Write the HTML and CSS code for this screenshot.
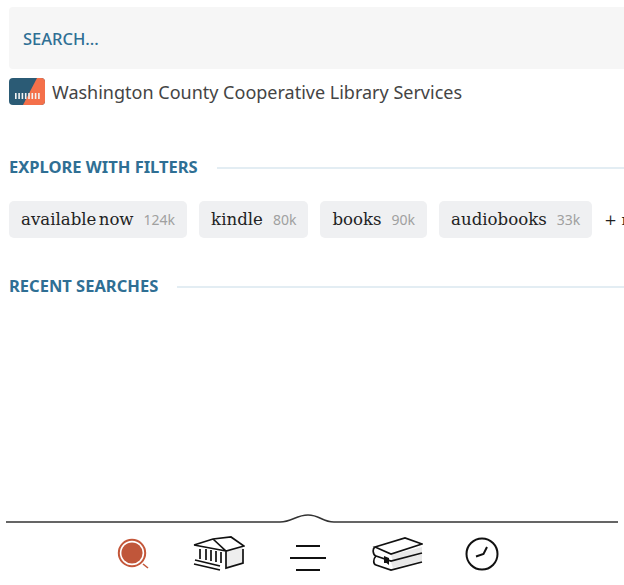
FILE: index.html
```html
<!DOCTYPE html>
<html>

<head>
  <title>Library Search</title>
  <link rel="stylesheet" href="styles.css">
</head>

<body>
  <div class="page">
    <div class="search-box">SEARCH...</div>

    <div class="library">
      <svg class="library-logo" viewBox="0 0 36 27" width="36" height="27">
        <rect width="36" height="27" rx="4" fill="#2b5b75"/>
        <path d="M28 0h4a4 4 0 0 1 4 4v19a4 4 0 0 1-4 4H14z" fill="#f4704a"/>
        <g fill="#f3f3f3">
          <rect x="6" y="15" width="1.6" height="6"/>
          <rect x="9.3" y="15" width="1.6" height="6"/>
          <rect x="12.6" y="15" width="1.6" height="6"/>
          <rect x="15.9" y="15" width="1.6" height="6"/>
          <rect x="19.2" y="15" width="1.6" height="6"/>
          <rect x="22.5" y="15" width="1.6" height="6"/>
          <rect x="25.8" y="15" width="1.6" height="6"/>
          <rect x="29.1" y="15" width="1.6" height="6"/>
        </g>
      </svg>
      <span>Washington County Cooperative Library Services</span>
    </div>

    <div class="section-title explore">
      <h2>EXPLORE WITH FILTERS</h2>
      <div class="rule"></div>
    </div>

    <div class="filters">
      <div class="chip"><span class="chip-name">available now</span><span class="chip-count">124k</span></div>
      <div class="chip"><span class="chip-name">kindle</span><span class="chip-count">80k</span></div>
      <div class="chip"><span class="chip-name">books</span><span class="chip-count">90k</span></div>
      <div class="chip"><span class="chip-name">audiobooks</span><span class="chip-count">33k</span></div>
      <div class="more">+ more</div>
    </div>

    <div class="section-title recent">
      <h2>RECENT SEARCHES</h2>
      <div class="rule"></div>
    </div>
  </div>

  <nav class="nav">
    <svg class="nav-line" viewBox="0 0 612 12" width="612" height="12">
      <path d="M0 11H274C286 11 290 4 302 4S316 11 328 11H612" fill="none" stroke="#333" stroke-width="1.5"/>
    </svg>
    <div class="nav-icons">
      <!-- search -->
      <svg viewBox="0 0 34 34" width="34" height="34">
        <circle cx="16" cy="16" r="13.2" fill="none" stroke="#c4573a" stroke-width="2"/>
        <circle cx="16" cy="16" r="10.6" fill="#c0563a"/>
        <path d="M27 27l5 4" stroke="#c4573a" stroke-width="1.6" fill="none"/>
      </svg>
      <!-- library -->
      <svg class="nav-bank" viewBox="0 0 52 36" width="52" height="36">
        <path d="M33 15L50 10V27L33 33z" fill="#eee"/>
        <path d="M1 9L20 3L38 1L51 10L33 15L20 3M1 9L33 15M33 15V32L50 27V13" fill="none" stroke="#111" stroke-width="1.7"/>
        <path d="M7 13V23M13 13V24M18 14V25M23 15V26M28 16V27" fill="none" stroke="#111" stroke-width="1.7"/>
        <path d="M2 24L27 30M1 28L27 34" fill="none" stroke="#111" stroke-width="1.7"/>
      </svg>
      <!-- menu -->
      <svg class="nav-menu" viewBox="0 0 36 28" width="36" height="28">
        <path d="M6 2H30M0 14H36M6 26H30" stroke="#111" stroke-width="2" fill="none"/>
      </svg>
      <!-- books -->
      <svg class="nav-books" viewBox="0 0 52 34" width="52" height="34">
        <path d="M20 18L51 10V15L22 24zM20 25L51 17V24L22 31z" fill="#e8e8e8"/>
        <path d="M4 10L34 1L51 7L20 17zM4 10C1 12 2 18 5 19L20 24L51 16M5 19C2 22 2 27 5 28L20 33L51 25" fill="none" stroke="#111" stroke-width="1.7"/>
        <path d="M13 19L18 21V28L15.5 26L13 26z" fill="#111"/>
      </svg>
      <!-- recent -->
      <svg class="nav-clock" viewBox="0 0 34 34" width="34" height="34">
        <circle cx="17" cy="17" r="15.5" fill="none" stroke="#111" stroke-width="2"/>
        <path d="M22 10L18.5 17L11 19.5" fill="none" stroke="#111" stroke-width="2"/>
      </svg>
    </div>
  </nav>
</body>

</html>
```

FILE: styles.css
```css
/* Global styles */
body {
  font-family: 'Noto Sans', sans-serif;
  margin: 0;
  width: 624px;
  height: 585px;
  overflow: hidden;
  display: flex;
  flex-direction: column;
  background-color: #ffffff;
}

.page {
  flex-grow: 1;
  padding: 7px 0 0 9px;
  min-height: 0;
}

/* Search box */
.search-box {
  height: 62px;
  margin-right: -20px;
  padding-left: 14px;
  display: flex;
  align-items: center;
  background-color: #f6f6f6;
  border-radius: 4px;
  color: #2f6f94;
  font-size: 16.5px;
  font-weight: 500;
}

/* Library row */
.library {
  display: flex;
  align-items: center;
  gap: 7px;
  margin-top: 9px;
  color: #444444;
  font-size: 18px;
  white-space: nowrap;
}

.library-logo {
  flex-shrink: 0;
}

/* Section headings */
.section-title {
  display: flex;
  align-items: center;
  gap: 19px;
}

.section-title h2 {
  margin: 0;
  color: #2f6f94;
  font-size: 16.5px;
  font-weight: 700;
  white-space: nowrap;
}

.section-title .rule {
  flex-grow: 1;
  height: 2px;
  margin-top: 2px;
  background-color: #e3edf3;
}

.explore {
  margin-top: 50px;
}

.recent {
  margin-top: 36px;
}

/* Filter chips */
.filters {
  display: flex;
  align-items: center;
  gap: 12px;
  margin-top: 23px;
  white-space: nowrap;
  overflow: hidden;
}

.chip {
  height: 37px;
  display: flex;
  align-items: center;
  gap: 10px;
  padding: 0 12px;
  flex-shrink: 0;
  background-color: #eff0f2;
  border-radius: 5px;
}

.chip-name {
  font-family: 'DejaVu Serif', serif;
  font-size: 16.6px;
  word-spacing: -3px;
  color: #222222;
}

.chip-count {
  font-size: 14px;
  color: #a0a0a0;
}

.more {
  flex-shrink: 0;
  font-family: 'DejaVu Serif', serif;
  font-size: 15px;
  color: #222222;
}

/* Bottom nav */
.nav {
  flex-shrink: 0;
  height: 74px;
  padding-left: 6px;
}

.nav-line {
  display: block;
}

.nav-icons {
  display: flex;
  align-items: center;
  gap: 44px;
  margin-top: 13px;
  padding-left: 110px;
}

.nav-icons svg {
  flex-shrink: 0;
}

.nav-bank {
  margin-left: -1px;
}

.nav-menu {
  margin-left: 1px;
  margin-top: 8px;
}

.nav-books {
  margin-left: 1px;
}

.nav-clock {
  margin-left: -2px;
}
```
